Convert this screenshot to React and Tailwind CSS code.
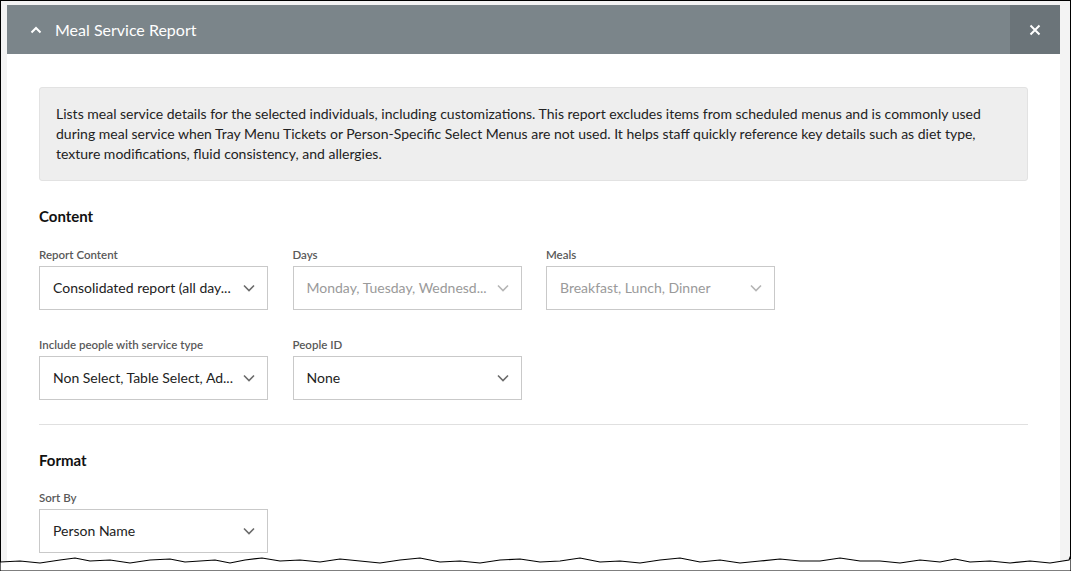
import React from 'react';

const font = { fontFamily: 'Lato, "Open Sans", sans-serif' };

function Chevron({ muted }) {
  return (
    <svg width="14" height="14" viewBox="0 0 14 14" className={muted ? 'text-[#b5b5b5]' : 'text-[#6b6b6b]'}>
      <path d="M2 4.5 L7 9.5 L12 4.5" fill="none" stroke="currentColor" strokeWidth="1.6" />
    </svg>
  );
}

function Field({ label, value, muted, width = 'w-[229px]' }) {
  return (
    <div className={width}>
      <div className="text-[11.5px] leading-[14px] font-semibold text-[#595959] mb-[4px]">{label}</div>
      <div className="h-[44px] border border-[#c9c9c9] bg-white flex items-center justify-between pl-[13px] pr-[11px]">
        <span className={'text-[14px] leading-[20px] whitespace-nowrap ' + (muted ? 'text-[#9a9a9a]' : 'text-[#222]')}>{value}</span>
        <Chevron muted={muted} />
      </div>
    </div>
  );
}

// jagged bottom edge of the cut screenshot
const torn =
  'M0 562 L20 561 L40 563 L60 560 L75 558 L90 561 L110 560 L130 563 L150 560 L170 559 L185 562 L200 561 L215 560 L230 563 L245 560 L262 558 L280 561 L300 560 L320 562 L340 559 L360 561 L380 563 L400 560 L420 558 L440 562 L460 561 L480 563 L500 560 L520 559 L540 562 L560 561 L580 558 L600 562 L620 561 L640 563 L660 560 L680 558 L700 562 L720 560 L740 563 L760 561 L780 559 L800 561 L820 561 L840 558 L860 561 L880 561 L900 563 L920 560 L940 562 L955 559 L970 562 L990 561 L1010 563 L1030 561 L1050 563 L1069 560 L1071 555 L1071 571 L0 571 Z';

export default function App() {
  return (
    <div className="relative w-[1071px] h-[571px] bg-white overflow-hidden" style={font}>
      <div className="h-[566px] border-l border-t border-r border-black bg-[#f3f3f3] pl-[6px] pt-[4px] pr-[10px]">
        <div className="h-[49px] bg-[#7b858a] flex items-center">
          <div className="flex-1 flex items-center pl-[23px]">
            <svg width="12" height="12" viewBox="0 0 12 12" className="text-white">
              <path d="M1.5 8.5 L6 4 L10.5 8.5" fill="none" stroke="currentColor" strokeWidth="2" />
            </svg>
            <span className="ml-[13px] text-[16px] text-white">Meal Service Report</span>
          </div>
          <div className="w-[50px] h-full bg-[#6b7479] flex items-center justify-center">
            <svg width="12" height="12" viewBox="0 0 12 12" className="text-white">
              <path d="M1.5 1.5 L10.5 10.5 M10.5 1.5 L1.5 10.5" fill="none" stroke="currentColor" strokeWidth="2" />
            </svg>
          </div>
        </div>
        <div className="bg-white h-[512px] px-[32px] pt-[33px]">
          <div className="bg-[#eeeeee] border border-[#e2e2e2] rounded-[3px] px-[16px] py-[16px] text-[14px] leading-[20px] text-[#222]">
            Lists meal service details for the selected individuals, including customizations. This report excludes items from scheduled menus and is commonly used during meal service when Tray Menu Tickets or Person-Specific Select Menus are not used. It helps staff quickly reference key details such as diet type, texture modifications, fluid consistency, and allergies.
          </div>

          <h2 className="mt-[25px] text-[15px] leading-[20px] font-bold text-[#111]">Content</h2>
          <div className="mt-[22px] flex gap-[24.5px]">
            <Field label="Report Content" value="Consolidated report (all day..." />
            <Field label="Days" value="Monday, Tuesday, Wednesd..." muted />
            <Field label="Meals" value="Breakfast, Lunch, Dinner" muted />
          </div>
          <div className="mt-[28px] flex gap-[24.5px]">
            <Field label="Include people with service type" value="Non Select, Table Select, Ad..." />
            <Field label="People ID" value="None" />
          </div>

          <div className="mt-[24px] border-t border-[#e0e0e0]" />

          <h2 className="mt-[25px] text-[15px] leading-[20px] font-bold text-[#111]">Format</h2>
          <div className="mt-[21px] flex">
            <Field label="Sort By" value="Person Name" />
          </div>
        </div>
      </div>
      <svg className="absolute left-0 top-0" width="1071" height="571" viewBox="0 0 1071 571">
        <path d={torn} fill="#ffffff" stroke="#000000" strokeWidth="1.2" />
      </svg>
    </div>
  );
}
